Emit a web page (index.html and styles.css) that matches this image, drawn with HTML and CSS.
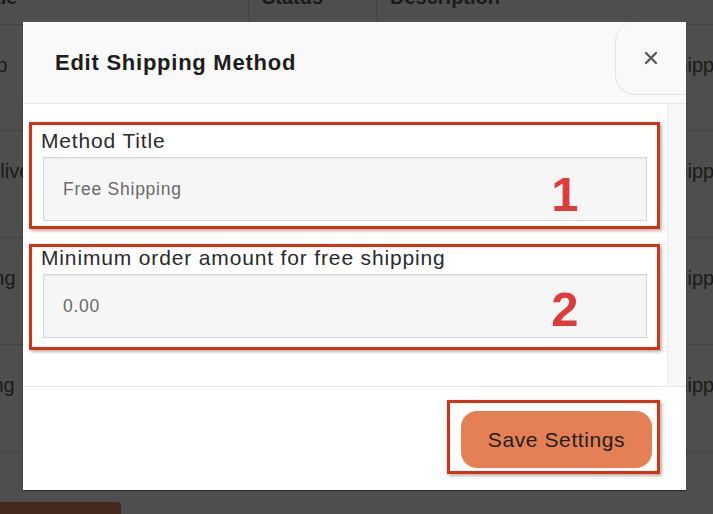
FILE: index.html
```html
<!DOCTYPE html>
<html lang="en">
<head>
<meta charset="utf-8">
<title>Edit Shipping Method</title>
<link rel="stylesheet" href="styles.css">
</head>
<body>
<div class="page">
  <div class="table">
    <div class="thead">
      <div class="th c1">Method Title</div>
      <div class="th c2">Status</div>
      <div class="th c3">Description</div>
      <div class="th c4"></div>
    </div>
    <div class="tr">
      <div class="td c1 r1">Local Pickup</div>
      <div class="td c2"></div>
      <div class="td c3"></div>
      <div class="td c4">Shipping</div>
    </div>
    <div class="tr">
      <div class="td c1 r2">Express Delivery</div>
      <div class="td c2"></div>
      <div class="td c3"></div>
      <div class="td c4">Shipping</div>
    </div>
    <div class="tr">
      <div class="td c1 r3">Free Shipping</div>
      <div class="td c2"></div>
      <div class="td c3"></div>
      <div class="td c4">Shipping</div>
    </div>
    <div class="tr">
      <div class="td c1 r4">Flat Shipping</div>
      <div class="td c2"></div>
      <div class="td c3"></div>
      <div class="td c4">Shipping</div>
    </div>
  </div>
  <div class="page-btn"></div>
</div>

<div class="modal">
  <div class="modal-head">
    <h2 class="modal-title">Edit Shipping Method</h2>
    <button class="close" aria-label="Close">
      <svg width="14" height="14" viewBox="0 0 14 14"><path d="M2 2 L12 12 M12 2 L2 12" stroke="#555" stroke-width="2.3" stroke-linecap="round"/></svg>
    </button>
  </div>
  <div class="modal-body">
    <div class="fields">
      <div class="field mark">
        <label class="label">Method Title</label>
        <input class="input" type="text" placeholder="Free Shipping">
        <span class="num n1">1</span>
      </div>
      <div class="field mark f2">
        <label class="label">Minimum order amount for free shipping</label>
        <input class="input" type="text" placeholder="0.00">
        <span class="num n2">2</span>
      </div>
    </div>
    <div class="scrolltrack"></div>
  </div>
  <div class="modal-foot">
    <div class="mark btn-mark"><button class="save">Save Settings</button></div>
  </div>
</div>
</body>
</html>
```

FILE: styles.css
```css
* { box-sizing: border-box; }
html, body { margin: 0; padding: 0; }
body {
  width: 713px;
  height: 514px;
  overflow: hidden;
  background: #4e4e4e;
  font-family: "Liberation Sans", Arial, sans-serif;
  color: #1a1a1a;
  position: relative;
}

/* background table */
.page { width: 713px; }
.table { margin-left: -100px; margin-top: -18px; width: 813px; }
.thead, .tr {
  display: grid;
  grid-template-columns: 348px 128px 279px 1fr;
  border-bottom: 1px solid #434343;
}
.thead { height: 43px; }
.tr { height: 107px; }
.tr:nth-child(2) { height: 106px; }
.th {
  font-weight: bold;
  font-size: 20px;
  line-height: 24px;
  padding-top: 3px;
  white-space: nowrap;
}
.td {
  font-size: 20px;
  line-height: 24px;
  padding-top: 28px;
  white-space: nowrap;
}
.td.r1 { text-indent: -6px; }
.td.r2 { text-indent: -3px; }
.td.r3 { text-indent: -9px; }
.td.r4 { text-indent: -2px; }
.th.c2, .th.c3 { border-left: 1px solid #444; }
.c2, .c3 { padding-left: 13px; }
.c4 { padding-left: 8px; }
.page-btn {
  margin-top: 50px;
  margin-left: -10px;
  width: 131px;
  height: 12px;
  background: #45291d;
  border-radius: 4px 4px 0 0;
}

/* modal */
.modal {
  position: absolute;
  left: 23px;
  top: 22px;
  width: 663px;
  height: 468px;
  background: #fff;
  display: flex;
  flex-direction: column;
  overflow: hidden;
  box-shadow: 0 1px 1px rgba(0,0,0,0.35);
}
.modal-head {
  height: 82px;
  flex: none;
  background: #f9f9f9;
  border-bottom: 1px solid #e8e8e8;
  display: flex;
  justify-content: space-between;
  align-items: center;
  padding-left: 32px;
}
.modal-title {
  margin: 0;
  font-size: 22px;
  font-weight: bold;
  letter-spacing: 0.75px;
  color: #1d1d1d;
}
.close {
  align-self: flex-start;
  width: 71px;
  height: 73px;
  background: #f9f9f9;
  border: 1px solid #e3e3e3;
  border-top: none;
  border-right: none;
  border-radius: 20px 0 0 20px;
  display: flex;
  align-items: center;
  justify-content: center;
  padding: 0;
}

.modal-body {
  height: 282px;
  flex: none;
  display: flex;
}
.fields {
  flex: 1;
  padding: 18px 7px 0 6px;
}
.scrolltrack {
  width: 19px;
  background: #f8f8f8;
  border-left: 1px solid #ececec;
}

.mark {
  border: 3px solid #d9300f;
  box-shadow: 2px 2px 3px rgba(0,0,0,0.3);
}
.field {
  position: relative;
  padding: 5px 10px 5px 11px;
}
.field.f2 {
  margin-top: 15px;
  padding-top: 0;
  padding-bottom: 9px;
}
.label {
  display: block;
  margin-left: -2px;
  font-size: 21px;
  line-height: 22px;
  letter-spacing: 0.85px;
  color: #2a2a2a;
  margin-bottom: 5px;
}
.input {
  display: block;
  width: 100%;
  height: 64px;
  margin: 0;
  padding: 0 0 0 19px;
  border: 1px solid #d6d6d6;
  background: #f6f6f6;
  box-shadow: inset 0 1px 2px rgba(0,0,0,0.06);
  font-family: "Liberation Sans", Arial, sans-serif;
  font-size: 17.5px;
  letter-spacing: 0.75px;
  color: #666;
  outline: none;
}
.input::placeholder { color: #6a6a6a; opacity: 1; }

.num {
  position: absolute;
  right: 72px;
  width: 40px;
  text-align: center;
  font-size: 49px;
  line-height: 49px;
  font-weight: bold;
  color: #df3b3b;
}
.n1 { top: 45px; }
.n2 { top: 38px; }

.modal-foot {
  flex: 1;
  border-top: 1px solid #e4e4e4;
  background: #fff;
  display: flex;
  justify-content: flex-end;
  align-items: flex-start;
  padding: 13px 26px 0 0;
}
.btn-mark {
  padding: 8px 5px 3px 11px;
}
.save {
  display: block;
  width: 191px;
  height: 57px;
  border: none;
  border-radius: 16px;
  background: #e57f54;
  font-family: "Liberation Sans", Arial, sans-serif;
  font-size: 21px;
  letter-spacing: 0.6px;
  color: #1e1e1e;
  padding: 0;
}
```
